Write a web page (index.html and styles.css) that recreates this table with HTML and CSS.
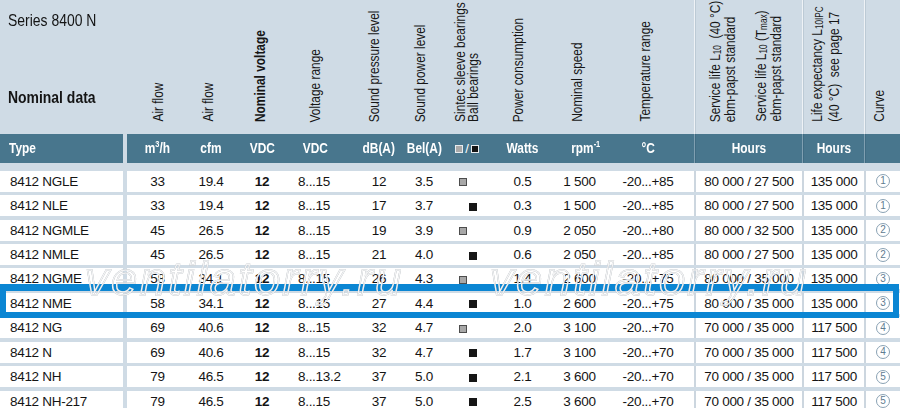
FILE: index.html
```html
<!DOCTYPE html>
<html lang="en">
<head>
<meta charset="utf-8">
<title>Series 8400 N – Nominal data</title>
<link rel="stylesheet" href="styles.css">
</head>
<body>
<div class="sheet">
  <div class="head grid">
    <div class="title">
      <div class="series"><span class="nx">Series 8400 N</span></div>
      <div class="nomdata"><span class="nx">Nominal data</span></div>
    </div>
    <div class="gapcell"></div>
    <div class="lab l3"><span class="vt">Air flow</span></div>
    <div class="lab l4"><span class="vt">Air flow</span></div>
    <div class="lab l5"><span class="vt b">Nominal voltage</span></div>
    <div class="lab l6"><span class="vt">Voltage range</span></div>
    <div class="lab l7"><span class="vt">Sound pressure level</span></div>
    <div class="lab l8"><span class="vt">Sound power level</span></div>
    <div class="lab l9"><span class="vt tight">Sintec sleeve bearings<br>Ball bearings</span></div>
    <div class="lab l10"><span class="vt">Power consumption</span></div>
    <div class="lab l11"><span class="vt">Nominal speed</span></div>
    <div class="lab l12"><span class="vt">Temperature range</span></div>
    <div class="lab l13 sep"><span class="vt loose">Service life L<sub>10</sub>&nbsp; (40 °C)<br>ebm-papst standard</span><span class="vt loose">Service life L<sub>10</sub> (T<sub>max</sub>)<br>ebm-papst standard</span></div>
    <div class="lab l14 sep"><span class="vt looser">Life expectancy L<sub>10IPC</sub><br>(40 °C)&nbsp; see page 17</span></div>
    <div class="lab l15 sep"><span class="vt">Curve</span></div>
  </div>

  <div class="bar grid">
    <div class="bc c1"><span class="nx">Type</span></div>
    <div class="gapcell"></div>
    <div class="bc c3"><span class="nx">m<sup>3</sup>/h</span></div>
    <div class="bc"><span class="nx">cfm</span></div>
    <div class="bc"><span class="nx">VDC</span></div>
    <div class="bc c6"><span class="nx">VDC</span></div>
    <div class="bc"><span class="nx">dB(A)</span></div>
    <div class="bc"><span class="nx">Bel(A)</span></div>
    <div class="bc"><span class="hsq gray"></span><span class="slash">/</span><span class="hsq black"></span></div>
    <div class="bc"><span class="nx">Watts</span></div>
    <div class="bc c11"><span class="nx">rpm<sup>-1</sup></span></div>
    <div class="bc c12"><span class="nx">°C</span></div>
    <div class="bc sep"><span class="nx">Hours</span></div>
    <div class="bc sep"><span class="nx">Hours</span></div>
    <div class="bc sep"></div>
  </div>

  <div class="rows">
    <div class="row grid">
      <div class="td c1">8412 NGLE</div><div class="gapcell"></div>
      <div class="td c3">33</div><div class="td">19.4</div><div class="td b">12</div><div class="td c6">8...15</div>
      <div class="td">12</div><div class="td">3.5</div><div class="td"><span class="sq gray"></span></div>
      <div class="td">0.5</div><div class="td">1&nbsp;500</div><div class="td c12">-20...+85</div>
      <div class="td sep">80&nbsp;000 / 27&nbsp;500</div><div class="td sep">135&nbsp;000</div><div class="td sep"><span class="cv">1</span></div>
    </div>
    <div class="row grid">
      <div class="td c1">8412 NLE</div><div class="gapcell"></div>
      <div class="td c3">33</div><div class="td">19.4</div><div class="td b">12</div><div class="td c6">8...15</div>
      <div class="td">17</div><div class="td">3.7</div><div class="td"><span class="sq black"></span></div>
      <div class="td">0.3</div><div class="td">1&nbsp;500</div><div class="td c12">-20...+85</div>
      <div class="td sep">80&nbsp;000 / 27&nbsp;500</div><div class="td sep">135&nbsp;000</div><div class="td sep"><span class="cv">1</span></div>
    </div>
    <div class="row grid">
      <div class="td c1">8412 NGMLE</div><div class="gapcell"></div>
      <div class="td c3">45</div><div class="td">26.5</div><div class="td b">12</div><div class="td c6">8...15</div>
      <div class="td">19</div><div class="td">3.9</div><div class="td"><span class="sq gray"></span></div>
      <div class="td">0.9</div><div class="td">2&nbsp;050</div><div class="td c12">-20...+80</div>
      <div class="td sep">80&nbsp;000 / 32&nbsp;500</div><div class="td sep">135&nbsp;000</div><div class="td sep"><span class="cv">2</span></div>
    </div>
    <div class="row grid">
      <div class="td c1">8412 NMLE</div><div class="gapcell"></div>
      <div class="td c3">45</div><div class="td">26.5</div><div class="td b">12</div><div class="td c6">8...15</div>
      <div class="td">21</div><div class="td">4.0</div><div class="td"><span class="sq black"></span></div>
      <div class="td">0.6</div><div class="td">2&nbsp;050</div><div class="td c12">-20...+85</div>
      <div class="td sep">80&nbsp;000 / 27&nbsp;500</div><div class="td sep">135&nbsp;000</div><div class="td sep"><span class="cv">2</span></div>
    </div>
    <div class="row grid">
      <div class="td c1">8412 NGME</div><div class="gapcell"></div>
      <div class="td c3">58</div><div class="td">34.1</div><div class="td b">12</div><div class="td c6">8...15</div>
      <div class="td">26</div><div class="td">4.3</div><div class="td"><span class="sq gray"></span></div>
      <div class="td">1.4</div><div class="td">2&nbsp;600</div><div class="td c12">-20...+75</div>
      <div class="td sep">80&nbsp;000 / 35&nbsp;000</div><div class="td sep">135&nbsp;000</div><div class="td sep"><span class="cv">3</span></div>
    </div>
    <div class="row grid hl">
      <div class="td c1">8412 NME</div><div class="gapcell"></div>
      <div class="td c3">58</div><div class="td">34.1</div><div class="td b">12</div><div class="td c6">8...15</div>
      <div class="td">27</div><div class="td">4.4</div><div class="td"><span class="sq black"></span></div>
      <div class="td">1.0</div><div class="td">2&nbsp;600</div><div class="td c12">-20...+75</div>
      <div class="td sep">80&nbsp;000 / 35&nbsp;000</div><div class="td sep">135&nbsp;000</div><div class="td sep"><span class="cv">3</span></div>
    </div>
    <div class="row grid">
      <div class="td c1">8412 NG</div><div class="gapcell"></div>
      <div class="td c3">69</div><div class="td">40.6</div><div class="td b">12</div><div class="td c6">8...15</div>
      <div class="td">32</div><div class="td">4.7</div><div class="td"><span class="sq gray"></span></div>
      <div class="td">2.0</div><div class="td">3&nbsp;100</div><div class="td c12">-20...+70</div>
      <div class="td sep">70&nbsp;000 / 35&nbsp;000</div><div class="td sep">117&nbsp;500</div><div class="td sep"><span class="cv">4</span></div>
    </div>
    <div class="row grid">
      <div class="td c1">8412 N</div><div class="gapcell"></div>
      <div class="td c3">69</div><div class="td">40.6</div><div class="td b">12</div><div class="td c6">8...15</div>
      <div class="td">32</div><div class="td">4.7</div><div class="td"><span class="sq black"></span></div>
      <div class="td">1.7</div><div class="td">3&nbsp;100</div><div class="td c12">-20...+70</div>
      <div class="td sep">70&nbsp;000 / 35&nbsp;000</div><div class="td sep">117&nbsp;500</div><div class="td sep"><span class="cv">4</span></div>
    </div>
    <div class="row grid">
      <div class="td c1">8412 NH</div><div class="gapcell"></div>
      <div class="td c3">79</div><div class="td">46.5</div><div class="td b">12</div><div class="td c6">8...13.2</div>
      <div class="td">37</div><div class="td">5.0</div><div class="td"><span class="sq black"></span></div>
      <div class="td">2.1</div><div class="td">3&nbsp;600</div><div class="td c12">-20...+70</div>
      <div class="td sep">70&nbsp;000 / 35&nbsp;000</div><div class="td sep">117&nbsp;500</div><div class="td sep"><span class="cv">5</span></div>
    </div>
    <div class="row grid">
      <div class="td c1">8412 NH-217</div><div class="gapcell"></div>
      <div class="td c3">79</div><div class="td">46.5</div><div class="td b">12</div><div class="td c6">8...15</div>
      <div class="td">37</div><div class="td">5.0</div><div class="td"><span class="sq black"></span></div>
      <div class="td">2.5</div><div class="td">3&nbsp;600</div><div class="td c12">-20...+70</div>
      <div class="td sep">70&nbsp;000 / 35&nbsp;000</div><div class="td sep">117&nbsp;500</div><div class="td sep"><span class="cv">5</span></div>
    </div>
  </div>

  <div class="wm wm1">ventilatorry.ru</div>
  <div class="wm wm2">ventilatorry.ru</div>
</div>
</body>
</html>
```

FILE: styles.css
```css
html, body {
  margin: 0;
  padding: 0;
}
body {
  background: #cfdbe5;
  width: 900px;
  height: 408px;
  overflow: hidden;
  font-family: "Liberation Sans", Arial, sans-serif;
  color: #141414;
}
.sheet {
  position: relative;
  width: 900px;
}
.grid {
  display: grid;
  grid-template-columns: 123px 4px 56px 56px 46px 67px 54px 36px 50px 61px 53px 88px 108px 62px 36px;
}

/* horizontally condensed text (Helvetica Condensed look) */
.nx {
  display: inline-block;
  transform: scaleX(0.82);
  white-space: nowrap;
}

/* ---------- top header with rotated labels ---------- */
.head {
  height: 134px;
  grid-template-rows: 134px;
}
.title {
  padding: 11px 0 0 8px;
}
.title .nx {
  transform-origin: 0 50%;
}
.series {
  font: 17px/20px "Liberation Sans", Arial, sans-serif;
  white-space: nowrap;
}
.nomdata {
  margin-top: 57px;
  font: bold 17px/20px "Liberation Sans", Arial, sans-serif;
  white-space: nowrap;
}
.lab {
  display: flex;
  align-items: flex-end;
  padding-bottom: 12px;
  box-sizing: border-box;
  min-width: 0;
  min-height: 0;
}
.head .sep {
  border-left: 1px solid #eef2f6;
  box-shadow: inset 1px 0 0 #bccad5;
}
.vt {
  writing-mode: vertical-rl;
  transform: translateY(9%) rotate(180deg) scaleY(0.82);
  font: 14.5px/14.5px "Liberation Sans", Arial, sans-serif;
  white-space: nowrap;
  color: #161616;
  flex: none;
}
.vt.b { font-weight: bold; }
.vt.tight { line-height: 13px; }
.vt.loose { line-height: 15px; }
.vt.looser { line-height: 17px; }
.vt sub {
  font-size: 10px;
  line-height: 0;
  vertical-align: -3px;
}
.l3 { padding-left: 24px; }
.l4 { padding-left: 18px; }
.l5 { padding-left: 14px; }
.l6 { padding-left: 23px; }
.l7 { padding-left: 15px; }
.l8 { padding-left: 7px; }
.l9 { padding-left: 12px; }
.l10 { padding-left: 19px; }
.l11 { padding-left: 17px; }
.l12 { padding-left: 32px; }
.l13 { padding-left: 13px; gap: 16px; }
.l14 { padding-left: 6px; }
.l15 { padding-left: 7px; }

/* ---------- dark unit bar ---------- */
.bar {
  height: 29px;
}
.bc {
  background: #48768d;
  color: #fff;
  font: bold 14.5px/29px "Liberation Sans", Arial, sans-serif;
  display: flex;
  align-items: center;
  justify-content: center;
  white-space: nowrap;
  box-sizing: border-box;
}
.bc sup {
  font-size: 9px;
  line-height: 0;
  vertical-align: 6px;
}
.bar .sep {
  border-left: 1px solid #7f9fb1;
  box-shadow: inset 1px 0 0 #3f6b82;
}
.bc.c1 { justify-content: flex-start; padding-left: 9px; }
.bc.c1 .nx { transform-origin: 0 50%; }
.bc.c3 { padding-left: 5px; }
.bc.c6 { padding-right: 7px; }
.bc.c11 { padding-left: 12px; }
.bc.c12 { padding-right: 4px; }
.hsq {
  display: inline-block;
  width: 6px;
  height: 6px;
  border: 1px solid #e8ecef;
}
.hsq.gray { background: #a9a9a9; }
.hsq.black { background: #141414; }
.slash {
  margin: 0 2px;
  font-weight: normal;
  font-size: 13px;
}

/* ---------- data rows ---------- */
.rows {
  padding-top: 7.7px;
  display: flex;
  flex-direction: column;
  gap: 3.45px;
}
.row {
  height: 21px;
  background: #fff;
}
.gapcell {
  background: #cfdbe5;
}
.td {
  display: flex;
  align-items: center;
  justify-content: center;
  font-size: 13.5px;
  letter-spacing: -0.3px;
  white-space: nowrap;
  box-sizing: border-box;
}
.td.b { font-weight: bold; }
.td.c1 { justify-content: flex-start; padding-left: 10px; }
.td.c3 { padding-left: 5px; }
.td.c6 { justify-content: flex-start; padding-left: 13px; }
.td.c12 { padding-right: 4px; }
.row .sep {
  border-left: 2px solid #ccd6df;
}
.sq {
  display: inline-block;
  width: 8px;
  height: 8px;
  box-sizing: border-box;
  align-self: center;
  margin-top: 2px;
}
.sq.gray {
  background: #a8a8a8;
  border: 1px solid #4d4d4d;
  margin-right: 9px;
}
.sq.black {
  background: #161616;
  margin-left: 12px;
}
.cv {
  display: inline-block;
  width: 12px;
  height: 12px;
  border: 1px solid #8aa2b4;
  border-radius: 50%;
  font-size: 10px;
  line-height: 12px;
  letter-spacing: 0;
  text-align: center;
  color: #5f7c91;
}

/* highlighted row frame */
.row.hl {
  position: relative;
}
.row.hl::after {
  content: "";
  position: absolute;
  left: 0;
  right: 1px;
  top: -9px;
  bottom: -4px;
  border: 6px solid #0b86d3;
  border-top-width: 7px;
  pointer-events: none;
}

/* watermark */
.wm {
  position: absolute;
  top: 255px;
  font: italic 47px/47px "Liberation Sans", Arial, sans-serif;
  letter-spacing: 2.5px;
  color: transparent;
  -webkit-text-stroke: 1.4px rgba(255, 255, 255, 0.9);
  filter: drop-shadow(0 0 0.7px rgba(110, 120, 130, 0.9));
  white-space: nowrap;
  pointer-events: none;
}
.wm1 { left: 85px; }
.wm2 { left: 490px; }
```
